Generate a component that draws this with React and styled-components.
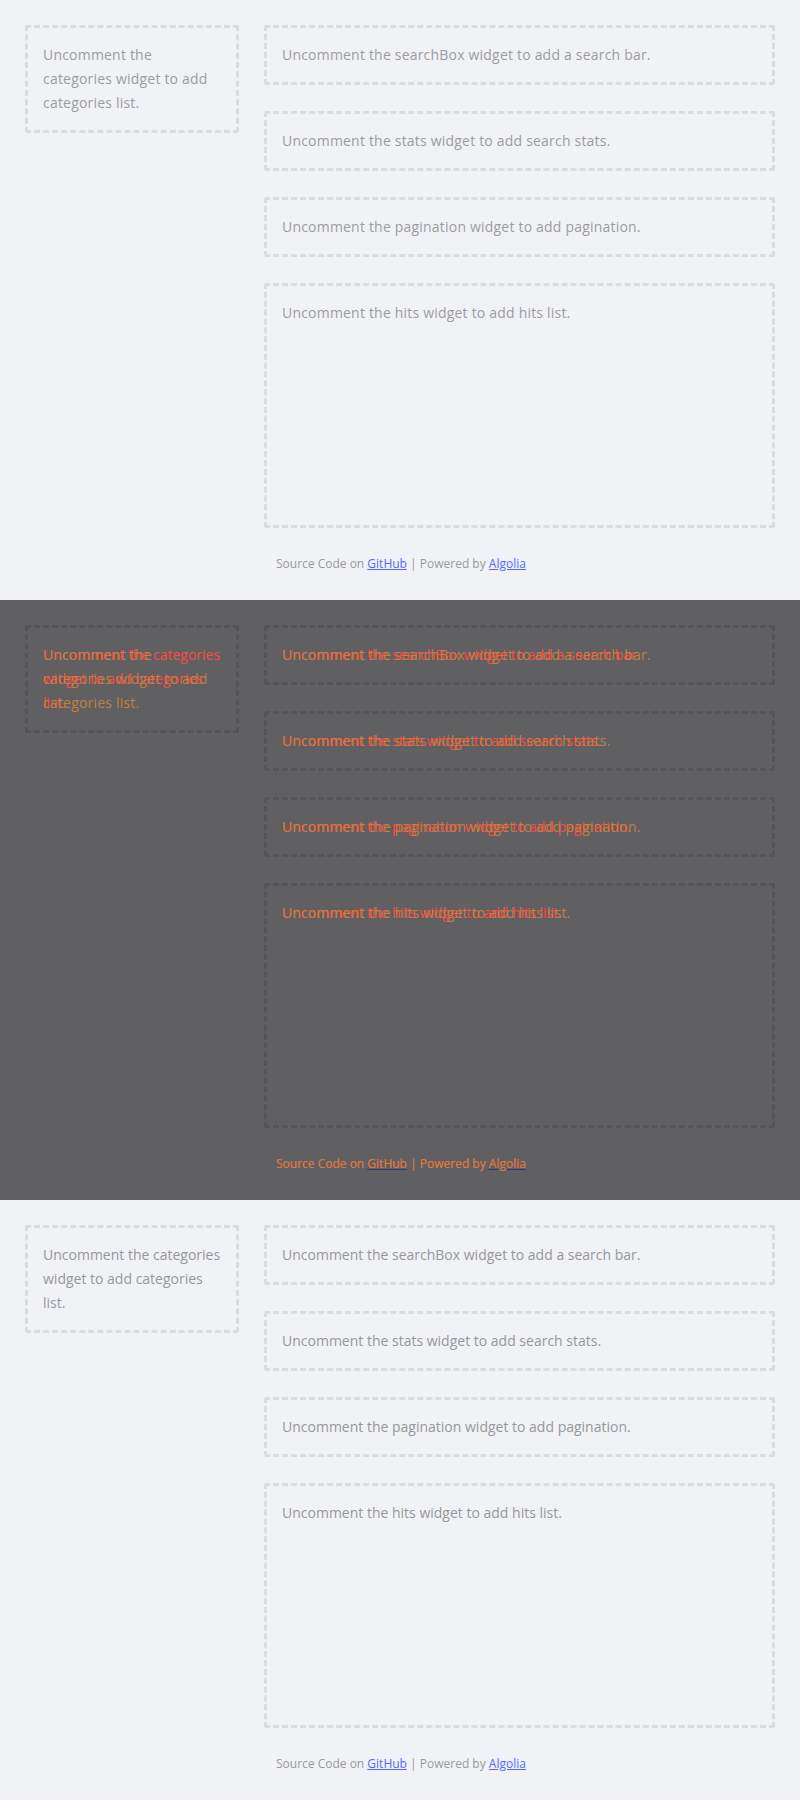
import React from "react";
import styled, { createGlobalStyle, css } from "styled-components";

const Global = createGlobalStyle`
  html, body { margin: 0; padding: 0; }
  body { background: #f1f2f6; }
`;

const FONTS = {
  a: css`
    font-family: "Open Sans", "Noto Sans", sans-serif;
    letter-spacing: 0.2px;
  `,
  b: css`
    font-family: "Open Sans", "Noto Sans", sans-serif;
    letter-spacing: 0;
  `,
};

const Section = styled.section`
  height: 600px;
  box-sizing: border-box;
  padding: 25px 25px 0 25px;
  background: ${(p) => (p.$dark ? "#606062" : "#f1f2f6")};
`;

const Layout = styled.div`
  display: grid;
  grid-template-columns: 214px 1fr;
  column-gap: 25px;
  align-items: start;
`;

const Column = styled.div`
  display: flex;
  flex-direction: column;
  gap: 26px;
`;

const Widget = styled.div`
  position: relative;
  box-sizing: border-box;
  border: 3px dashed ${(p) => (p.$dark ? "#555557" : "#dcdcde")};
  border-radius: 3px;
  padding: 15px;
  min-height: ${(p) => (p.$tall ? "245px" : "auto")};
`;

const Text = styled.p`
  margin: 0;
  ${(p) => FONTS[p.$font]};
  font-size: 14px;
  line-height: 24px;
  color: ${(p) => p.$color};
  opacity: ${(p) => p.$alpha ?? 1};
  ${(p) =>
    p.$overlay &&
    css`
      position: absolute;
      top: 15px;
      left: 15px;
      right: 15px;
    `}
`;

const Footer = styled.footer`
  position: relative;
  margin-top: 27px;
  padding-left: 12px;
  height: 18px;
`;

const FooterText = styled.div`
  font-family: "Open Sans", "Noto Sans", sans-serif;
  font-size: 12px;
  line-height: 18px;
  color: ${(p) => p.$color};
  opacity: ${(p) => p.$alpha ?? 1};
  white-space: nowrap;
  ${(p) =>
    p.$overlay &&
    css`
      position: absolute;
      top: 0;
      left: 12px;
    `}
`;

const Link = styled.a`
  color: ${(p) => p.$color};
  text-decoration: underline;
  text-decoration-color: ${(p) => p.$line || "currentColor"};
`;

const widgets = {
  left: "Uncomment the categories widget to add categories list.",
  right: [
    "Uncomment the searchBox widget to add a search bar.",
    "Uncomment the stats widget to add search stats.",
    "Uncomment the pagination widget to add pagination.",
    "Uncomment the hits widget to add hits list.",
  ],
};

function WidgetText({ children, mode, font }) {
  if (mode === "diff") {
    return (
      <>
        <Text $font="b" $color="#ff4747">{children}</Text>
        <Text $font="a" $color="#c8843f" $alpha={0.9} $overlay>{children}</Text>
      </>
    );
  }
  return <Text $font={font} $color={font === "a" ? "#9c9c9e" : "#979799"}>{children}</Text>;
}

function FooterLine({ color, linkColor, line, overlay, alpha }) {
  return (
    <FooterText $color={color} $overlay={overlay} $alpha={alpha}>
      Source Code on <Link href="#" $color={linkColor} $line={line}>GitHub</Link> | Powered by{" "}
      <Link href="#" $color={linkColor} $line={line}>Algolia</Link>
    </FooterText>
  );
}

function Screen({ mode, font }) {
  const dark = mode === "diff";
  return (
    <Section $dark={dark}>
      <Layout>
        <Column>
          <Widget $dark={dark}>
            <WidgetText mode={mode} font={font}>{widgets.left}</WidgetText>
          </Widget>
        </Column>
        <div>
          <Column>
            {widgets.right.map((t, i) => (
              <Widget key={i} $dark={dark} $tall={i === 3}>
                <WidgetText mode={mode} font={font}>{t}</WidgetText>
              </Widget>
            ))}
          </Column>
          <Footer>
            {dark ? (
              <>
                <FooterLine color="#ff5a3c" linkColor="#ff5a3c" line="#343a70" />
                <FooterLine color="#c8843f" linkColor="#c8843f" line="#343a70" alpha={0.85} overlay />
              </>
            ) : (
              <FooterLine color="#9a9a9c" linkColor="#5468ff" />
            )}
          </Footer>
        </div>
      </Layout>
    </Section>
  );
}

export default function App() {
  return (
    <>
      <Global />
      <Screen mode="light" font="a" />
      <Screen mode="diff" />
      <Screen mode="light" font="b" />
    </>
  );
}
